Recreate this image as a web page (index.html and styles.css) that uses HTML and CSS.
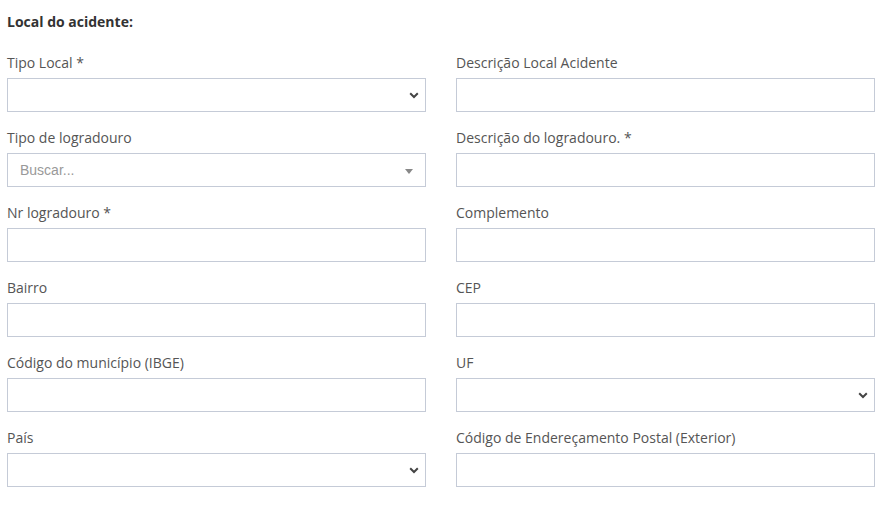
FILE: index.html
```html
<!DOCTYPE html>
<html lang="pt">
<head>
<meta charset="utf-8">
<link rel="stylesheet" href="styles.css">
</head>
<body>
<div class="page">
  <h4 class="section-title">Local do acidente:</h4>
  <div class="form-grid">
    <div class="field">
      <label class="field-label">Tipo Local *</label>
      <div class="select-box"><span class="chev"><svg width="10" height="7" viewBox="0 0 10 7"><path d="M1.2 1.3 L5 5 L8.8 1.3" fill="none" stroke="#444" stroke-width="2"/></svg></span></div>
    </div>
    <div class="field">
      <label class="field-label">Descrição Local Acidente</label>
      <div class="input-box"></div>
    </div>
    <div class="field">
      <label class="field-label">Tipo de logradouro</label>
      <div class="input-box search-box"><span class="placeholder">Buscar...</span><span class="caret"></span></div>
    </div>
    <div class="field">
      <label class="field-label">Descrição do logradouro. *</label>
      <div class="input-box"></div>
    </div>
    <div class="field">
      <label class="field-label">Nr logradouro *</label>
      <div class="input-box"></div>
    </div>
    <div class="field">
      <label class="field-label">Complemento</label>
      <div class="input-box"></div>
    </div>
    <div class="field">
      <label class="field-label">Bairro</label>
      <div class="input-box"></div>
    </div>
    <div class="field">
      <label class="field-label">CEP</label>
      <div class="input-box"></div>
    </div>
    <div class="field">
      <label class="field-label">Código do município (IBGE)</label>
      <div class="input-box"></div>
    </div>
    <div class="field">
      <label class="field-label">UF</label>
      <div class="select-box"><span class="chev"><svg width="10" height="7" viewBox="0 0 10 7"><path d="M1.2 1.3 L5 5 L8.8 1.3" fill="none" stroke="#444" stroke-width="2"/></svg></span></div>
    </div>
    <div class="field">
      <label class="field-label">País</label>
      <div class="select-box"><span class="chev"><svg width="10" height="7" viewBox="0 0 10 7"><path d="M1.2 1.3 L5 5 L8.8 1.3" fill="none" stroke="#444" stroke-width="2"/></svg></span></div>
    </div>
    <div class="field">
      <label class="field-label">Código de Endereçamento Postal (Exterior)</label>
      <div class="input-box"></div>
    </div>
  </div>
</div>
</body>
</html>
```
FILE: styles.css
```css
html, body {
  margin: 0;
  padding: 0;
  background: #fff;
}
body {
  font-family: "Open Sans", "Noto Sans", sans-serif;
  font-size: 14px;
  color: #555;
}
.page {
  padding: 12px 8px 0 7px;
}
.section-title {
  margin: 0 0 21px 0;
  font-size: 14px;
  line-height: 20px;
  font-weight: 700;
  color: #333;
}
.form-grid {
  display: grid;
  grid-template-columns: 419px 419px;
  column-gap: 30px;
  row-gap: 16px;
}
.field {
  display: flex;
  flex-direction: column;
}
.field-label {
  display: block;
  line-height: 20px;
  margin-bottom: 5px;
  color: #555;
}
.input-box, .select-box {
  box-sizing: border-box;
  height: 34px;
  border: 1px solid #c5cbd7;
  background: #fff;
  position: relative;
}
.select-box .chev {
  position: absolute;
  right: 6px;
  top: 13px;
  width: 10px;
  height: 7px;
  display: block;
}
.select-box .chev svg { display: block; }
.search-box {
  display: flex;
  align-items: center;
  padding-left: 12px;
}
.placeholder {
  font-family: "Liberation Sans", Arial, sans-serif;
  font-size: 14px;
  color: #999;
}
.caret {
  position: absolute;
  right: 12px;
  top: 15px;
  width: 0;
  height: 0;
  border-left: 4px solid transparent;
  border-right: 4px solid transparent;
  border-top: 5px solid #888;
}
```
